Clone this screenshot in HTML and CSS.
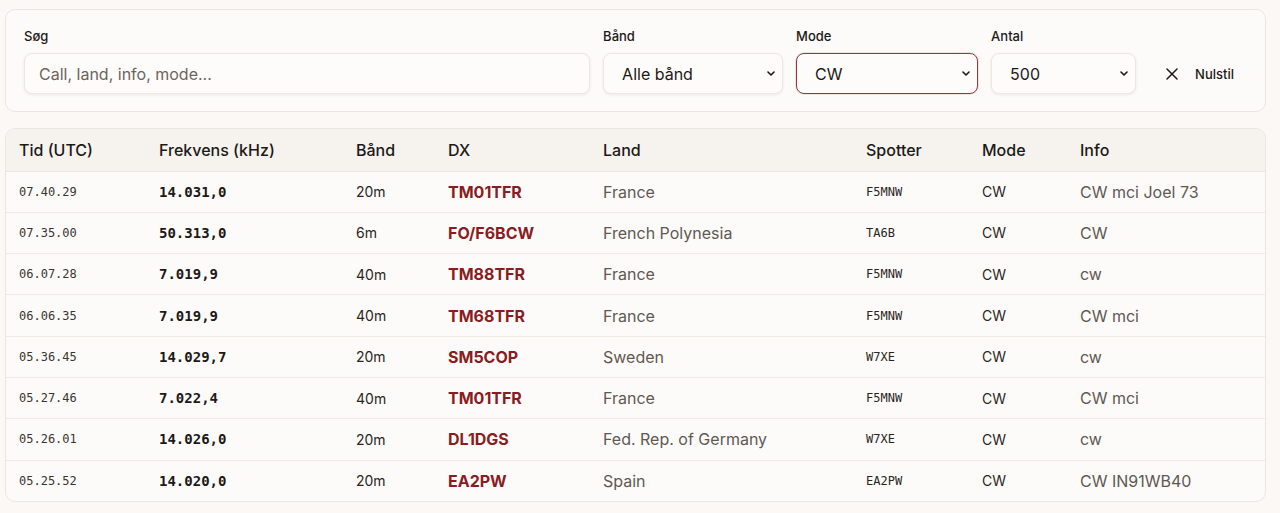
FILE: index.html
```html
<!DOCTYPE html>
<html lang="da">
<head>
<meta charset="utf-8">
<title>DX Cluster</title>
<link rel="stylesheet" href="styles.css">
</head>
<body>
<main class="page">
  <section class="filters">
    <div class="field field-search">
      <label class="label" for="q">Søg</label>
      <input id="q" class="input" type="text" placeholder="Call, land, info, mode...">
    </div>
    <div class="field field-band">
      <label class="label" for="band">Bånd</label>
      <div class="select-wrap">
        <select id="band" class="select"><option>Alle bånd</option></select>
        <svg class="chev" viewBox="0 0 8 5" width="8" height="5"><path d="M1 1l3 3 3-3" fill="none" stroke="#1c1917" stroke-width="1.6" stroke-linecap="round" stroke-linejoin="round"/></svg>
      </div>
    </div>
    <div class="field field-mode">
      <label class="label" for="mode">Mode</label>
      <div class="select-wrap">
        <select id="mode" class="select select-active"><option>CW</option></select>
        <svg class="chev" viewBox="0 0 8 5" width="8" height="5"><path d="M1 1l3 3 3-3" fill="none" stroke="#1c1917" stroke-width="1.6" stroke-linecap="round" stroke-linejoin="round"/></svg>
      </div>
    </div>
    <div class="field field-count">
      <label class="label" for="count">Antal</label>
      <div class="select-wrap">
        <select id="count" class="select"><option>500</option></select>
        <svg class="chev" viewBox="0 0 8 5" width="8" height="5"><path d="M1 1l3 3 3-3" fill="none" stroke="#1c1917" stroke-width="1.6" stroke-linecap="round" stroke-linejoin="round"/></svg>
      </div>
    </div>
    <button class="reset" type="button">
      <svg viewBox="0 0 12 12" width="12" height="12"><path d="M1 1l10 10M11 1L1 11" stroke="#1c1917" stroke-width="1.5" stroke-linecap="round"/></svg>
      <span>Nulstil</span>
    </button>
  </section>

  <section class="table-card">
    <table class="spots">
      <colgroup>
        <col class="c-time"><col class="c-freq"><col class="c-band"><col class="c-dx">
        <col class="c-land"><col class="c-spot"><col class="c-mode"><col class="c-info">
      </colgroup>
      <thead>
        <tr><th>Tid (UTC)</th><th>Frekvens (kHz)</th><th>Bånd</th><th>DX</th><th>Land</th><th>Spotter</th><th>Mode</th><th>Info</th></tr>
      </thead>
      <tbody>
        <tr><td class="time">07.40.29</td><td class="freq">14.031,0</td><td class="band">20m</td><td class="dx">TM01TFR</td><td class="land">France</td><td class="spot">F5MNW</td><td class="mode">CW</td><td class="info">CW mci Joel 73</td></tr>
        <tr><td class="time">07.35.00</td><td class="freq">50.313,0</td><td class="band">6m</td><td class="dx">FO/F6BCW</td><td class="land">French Polynesia</td><td class="spot">TA6B</td><td class="mode">CW</td><td class="info">CW</td></tr>
        <tr><td class="time">06.07.28</td><td class="freq">7.019,9</td><td class="band">40m</td><td class="dx">TM88TFR</td><td class="land">France</td><td class="spot">F5MNW</td><td class="mode">CW</td><td class="info">cw</td></tr>
        <tr><td class="time">06.06.35</td><td class="freq">7.019,9</td><td class="band">40m</td><td class="dx">TM68TFR</td><td class="land">France</td><td class="spot">F5MNW</td><td class="mode">CW</td><td class="info">CW mci</td></tr>
        <tr><td class="time">05.36.45</td><td class="freq">14.029,7</td><td class="band">20m</td><td class="dx">SM5COP</td><td class="land">Sweden</td><td class="spot">W7XE</td><td class="mode">CW</td><td class="info">cw</td></tr>
        <tr><td class="time">05.27.46</td><td class="freq">7.022,4</td><td class="band">40m</td><td class="dx">TM01TFR</td><td class="land">France</td><td class="spot">F5MNW</td><td class="mode">CW</td><td class="info">CW mci</td></tr>
        <tr><td class="time">05.26.01</td><td class="freq">14.026,0</td><td class="band">20m</td><td class="dx">DL1DGS</td><td class="land">Fed. Rep. of Germany</td><td class="spot">W7XE</td><td class="mode">CW</td><td class="info">cw</td></tr>
        <tr><td class="time">05.25.52</td><td class="freq">14.020,0</td><td class="band">20m</td><td class="dx">EA2PW</td><td class="land">Spain</td><td class="spot">EA2PW</td><td class="mode">CW</td><td class="info">CW IN91WB40</td></tr>
      </tbody>
    </table>
  </section>
</main>
</body>
</html>
```
FILE: styles.css
```css
* { box-sizing: border-box; }

html, body {
  margin: 0;
  background: #fbf8f5;
  color: #1c1917;
  font-family: Inter, "Noto Sans", "Liberation Sans", sans-serif;
}

.page {
  padding: 9px 14px 10px 5px;
  display: flex;
  flex-direction: column;
  gap: 16px;
}

/* filter bar */
.filters {
  background: #fdfbf9;
  border: 1px solid #ebe6e0;
  border-radius: 10px;
  padding: 18px 18px 17px 18px;
  display: flex;
  align-items: flex-end;
  gap: 13px;
}

.field {
  display: flex;
  flex-direction: column;
  gap: 9px;
}
.field-search { flex: 1; }
.field-band { width: 180px; }
.field-mode { width: 182px; }
.field-count { width: 145px; }

.label {
  font-size: 13px;
  font-weight: 500;
  line-height: 16px;
  color: #1c1917;
}

.input,
.select {
  height: 41px;
  width: 100%;
  border: 1px solid #ece7e1;
  border-radius: 8px;
  background: #fefcfa;
  box-shadow: 0 1px 3px rgba(60, 40, 20, 0.09);
  font-family: inherit;
  font-size: 16px;
  color: #1c1917;
  outline: none;
}

.input { padding: 0 14px; }
.input::placeholder { color: #6b6560; }

.select-wrap { position: relative; }

.select {
  appearance: none;
  -webkit-appearance: none;
  padding: 0 32px 0 18px;
}

.select-active {
  border-color: #8e3a3e;
  box-shadow: 0 0 0 1px rgba(142, 58, 62, 0.12);
}

.chev {
  position: absolute;
  right: 8px;
  top: 18px;
  pointer-events: none;
}

.reset {
  height: 41px;
  margin-left: 4px;
  padding: 0 13px;
  display: flex;
  align-items: center;
  gap: 17px;
  border: 0;
  background: transparent;
  font-family: inherit;
  font-size: 13px;
  font-weight: 500;
  color: #1c1917;
}

/* spots table */
.table-card {
  background: #fdfbf9;
  border: 1px solid #ebe6e0;
  border-radius: 10px;
  overflow: hidden;
}

.spots {
  width: 100%;
  border-collapse: collapse;
  table-layout: fixed;
}

.c-time { width: 140px; }
.c-freq { width: 197px; }
.c-band { width: 92px; }
.c-dx { width: 155px; }
.c-land { width: 263px; }
.c-spot { width: 116px; }
.c-mode { width: 98px; }
.c-info { width: auto; }

.spots th {
  background: #f6f3ef;
  height: 42px;
  padding: 0 0 0 13px;
  text-align: left;
  font-size: 16px;
  font-weight: 500;
  color: #1c1917;
  border-bottom: 1px solid #ebe6e0;
}

.spots td {
  height: 41.3px;
  padding: 0 0 0 13px;
  border-top: 1px solid #efeae4;
  white-space: nowrap;
  font-size: 14px;
  color: #2a2523;
}
.spots tbody tr:first-child td { border-top: 0; }

.time {
  font-family: "DejaVu Sans Mono", "Liberation Mono", monospace;
  font-size: 12px !important;
  color: #3a3532 !important;
}
.freq {
  font-family: "DejaVu Sans Mono", "Liberation Mono", monospace;
  font-weight: 700;
  font-size: 14px !important;
  color: #1c1917 !important;
}
.dx {
  font-size: 16px !important;
  font-weight: 700;
  color: #8a1c22 !important;
}
.land,
.info {
  font-size: 16px !important;
  color: #5f5953 !important;
}
.spot {
  font-family: "DejaVu Sans Mono", "Liberation Mono", monospace;
  font-size: 12px !important;
  color: #2a2523 !important;
}
```
